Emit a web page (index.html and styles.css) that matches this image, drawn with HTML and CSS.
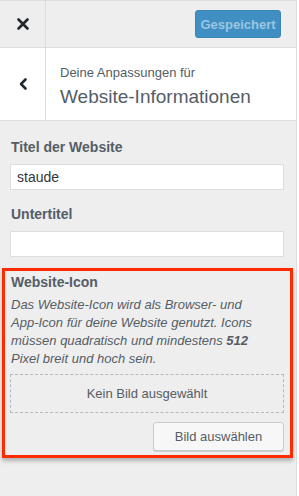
FILE: index.html
```html
<!DOCTYPE html>
<html lang="de">
<head>
    <meta charset="UTF-8">
    <meta name="viewport" content="width=device-width, initial-scale=1.0">
    <title>Customizer</title>
    <link rel="stylesheet" href="styles.css">
</head>
<body>
    <div class="panel">
        <div class="top-bar">
            <button class="close-btn" aria-label="Schließen">
                <svg width="14" height="14" viewBox="0 0 14 14"><path d="M2.5 2.5 L11.5 11.5 M11.5 2.5 L2.5 11.5" stroke="#23282d" stroke-width="2.6" stroke-linecap="round"/></svg>
            </button>
            <div class="top-actions">
                <button class="save-btn" disabled>Gespeichert</button>
            </div>
        </div>

        <div class="section-head">
            <button class="back-btn" aria-label="Zurück">
                <svg width="12" height="14" viewBox="0 0 12 14"><path d="M8.5 2.5 L4 7 L8.5 11.5" fill="none" stroke="#23282d" stroke-width="2.6" stroke-linecap="round" stroke-linejoin="round"/></svg>
            </button>
            <div class="section-title">
                <span class="crumb">Deine Anpassungen für</span>
                <h2>Website-Informationen</h2>
            </div>
        </div>

        <div class="controls">
            <div class="control">
                <label for="blogname">Titel der Website</label>
                <input type="text" id="blogname" value="staude">
            </div>
            <div class="control">
                <label for="tagline">Untertitel</label>
                <input type="text" id="tagline" value="">
            </div>
            <div class="control site-icon">
                <span class="label">Website-Icon</span>
                <p class="desc">Das Website-Icon wird als Browser- und App-Icon für deine Website genutzt. Icons müssen quadratisch und mindestens <strong>512</strong> Pixel breit und hoch sein.</p>
                <div class="placeholder">Kein Bild ausgewählt</div>
                <div class="actions">
                    <button class="btn">Bild auswählen</button>
                </div>
            </div>
        </div>
    </div>
</body>
</html>
```

FILE: styles.css
```css
body {
    margin: 0;
    font-family: "Liberation Sans", Arial, sans-serif;
    background-color: #fff;
    color: #555d66;
}

.panel {
    width: 297px;
    min-height: 496px;
    background-color: #eeeeee;
    border-right: 1px solid #dddddd;
    box-sizing: border-box;
}

.top-bar {
    display: flex;
    height: 48px;
    border-top: 1px solid #dddddd;
    border-bottom: 1px solid #dddddd;
    box-sizing: border-box;
}

.close-btn {
    width: 46px;
    border: 0;
    border-right: 1px solid #dddddd;
    background: transparent;
    display: flex;
    align-items: center;
    justify-content: center;
    padding: 0;
}

.top-actions {
    flex: 1;
    display: flex;
    justify-content: flex-end;
    align-items: center;
    padding-right: 15px;
}

.save-btn {
    width: 86px;
    height: 28px;
    background-color: #3f8fc3;
    border: 1px solid #3a86b8;
    border-radius: 3px;
    color: #9cc5e2;
    font-family: inherit;
    font-size: 13px;
    font-weight: bold;
    padding: 0;
}

.section-head {
    display: flex;
    height: 73px;
    background-color: #fff;
    border-bottom: 1px solid #dddddd;
    box-sizing: border-box;
}

.back-btn {
    width: 46px;
    border: 0;
    border-right: 1px solid #dddddd;
    background: transparent;
    display: flex;
    align-items: center;
    justify-content: center;
    padding: 0;
}

.section-title {
    padding: 17px 0 0 14px;
}

.crumb {
    display: block;
    font-size: 13px;
    color: #555d66;
}

.section-title h2 {
    margin: 6px 0 0;
    font-size: 19px;
    font-weight: 300;
    color: #555d66;
}

.controls {
    padding: 18px 12px 0 10px;
}

.control {
    margin-bottom: 16px;
}

.control label,
.control .label {
    display: block;
    font-size: 14px;
    font-weight: bold;
    margin: 0 0 9px 1px;
}

.control input {
    display: block;
    width: 100%;
    height: 26px;
    box-sizing: border-box;
    border: 1px solid #dddddd;
    background-color: #fff;
    font-family: inherit;
    font-size: 14px;
    color: #32373c;
    padding: 2px 6px;
}

.site-icon {
    margin: -5px -9px 0 -8px;
    padding: 3px 6px 4px 5px;
    border: 3px solid #ff2a00;
    box-shadow: 0 3px 4px rgba(0, 0, 0, 0.25);
}

.site-icon .label {
    margin-bottom: 6px;
}

.desc {
    margin: 0 0 6px;
    padding: 0 14px 0 1px;
    font-size: 13px;
    font-style: italic;
    line-height: 18px;
}

.desc strong {
    font-weight: bold;
}

.placeholder {
    height: 39px;
    border: 1px dashed #b4b9be;
    box-sizing: border-box;
    display: flex;
    align-items: center;
    justify-content: center;
    font-size: 13px;
}

.actions {
    display: flex;
    justify-content: flex-end;
    margin-top: 9px;
}

.btn {
    width: 131px;
    height: 29px;
    background-color: #f7f7f7;
    border: 1px solid #cccccc;
    border-radius: 3px;
    box-shadow: 0 1px 0 #cccccc;
    font-family: inherit;
    font-size: 13px;
    color: #555d66;
    padding: 0;
}
```
